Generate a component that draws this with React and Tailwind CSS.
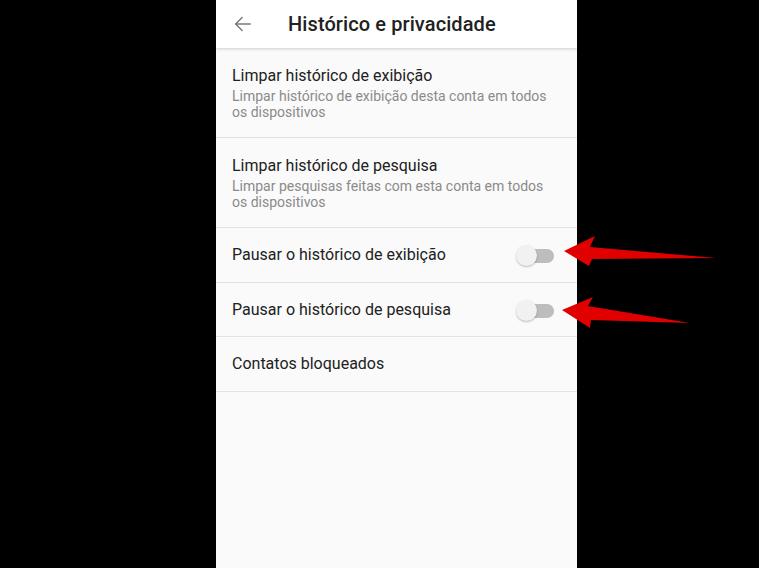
export default function App() {
  return (
    <div className="relative w-full h-[568px] bg-black overflow-hidden font-['Roboto',sans-serif]">
      <div className="ml-[216px] w-[361px] h-full bg-[#fafafa] flex flex-col">
        {/* Header */}
        <div className="h-12 shrink-0 bg-white flex items-center shadow-[0_1px_3px_rgba(0,0,0,0.18)] relative z-10">
          <div className="w-[72px] pl-[16px] flex items-center">
            <svg width="22" height="22" viewBox="0 0 24 24" fill="none" stroke="#7a7a7a" strokeWidth="1.6" strokeLinecap="round" strokeLinejoin="round">
              <path d="M20 12H4" />
              <path d="M11 5l-7 7 7 7" />
            </svg>
          </div>
          <h1 className="text-[20px] font-medium text-[#212121] tracking-[0.1px]">Histórico e privacidade</h1>
        </div>

        {/* Rows */}
        <Row
          title="Limpar histórico de exibição"
          sub="Limpar histórico de exibição desta conta em todos os dispositivos"
        />
        <Row
          title="Limpar histórico de pesquisa"
          sub="Limpar pesquisas feitas com esta conta em todos os dispositivos"
        />
        <ToggleRow title="Pausar o histórico de exibição" h="h-[55px]" />
        <ToggleRow title="Pausar o histórico de pesquisa" h="h-[54px]" />
        <div className="h-[55px] shrink-0 px-4 flex items-center border-b border-[#e3e3e3]">
          <span className="text-[16px] text-[#212121]">Contatos bloqueados</span>
        </div>
      </div>

      {/* Red arrows */}
      <svg className="absolute inset-0 pointer-events-none" width="759" height="568" viewBox="0 0 759 568">
        <polygon points="564,251 595,236 590,247 716,258 592,259 589,266" fill="#e00000" />
        <polygon points="562,310 593,297 588,306 690,323 591,320 590,328" fill="#e00000" />
      </svg>
    </div>
  );
}

function Row({ title, sub }) {
  return (
    <div className="h-[90px] shrink-0 px-4 pt-[18px] border-b border-[#e3e3e3]">
      <div className="text-[16px] leading-5 text-[#212121]">{title}</div>
      <div className="mt-0.5 text-[14px] leading-4 text-[#8a8a8a]">{sub}</div>
    </div>
  );
}

function ToggleRow({ title, h }) {
  return (
    <div className={`${h} shrink-0 px-4 flex items-center justify-between border-b border-[#e3e3e3]`}>
      <span className="text-[16px] text-[#212121]">{title}</span>
      <div className="relative w-[34px] h-[14px] mr-[7px] mt-[2px] rounded-full bg-[#bdbdbd]">
        <div className="absolute -left-[4px] -top-[4px] w-[21px] h-[21px] rounded-full bg-[#f1f1f1] shadow-[0_1px_2px_rgba(0,0,0,0.25)]" />
      </div>
    </div>
  );
}
